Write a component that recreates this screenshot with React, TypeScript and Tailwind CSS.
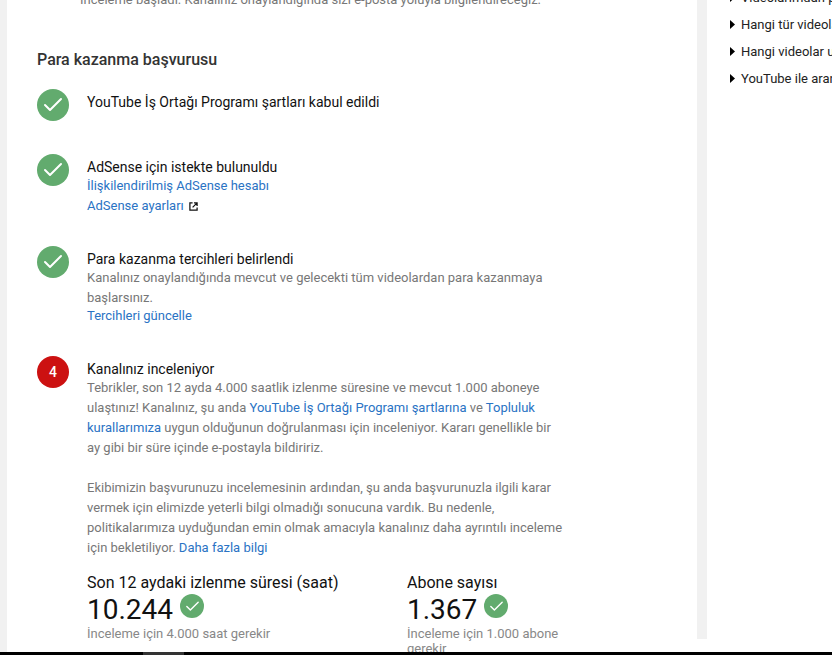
import { Check } from "lucide-react";

const GREEN = "bg-[#62ab6e]";

function StepIcon({ done = true, n }: { done?: boolean; n?: number }) {
    return (
        <div className={`flex h-8 w-8 shrink-0 items-center justify-center rounded-full ${done ? GREEN : "bg-[#cc1111]"}`}>
            {done ? <CheckMark size={24} /> : <span className="text-sm font-medium text-white">{n}</span>}
        </div>
    );
}

function CheckMark({ size }: { size: number }) {
    return <Check size={size} color="white" strokeWidth={2} />;
}

function Stat({ label, value, note, width }: { label: string; value: string; note: string; width: string }) {
    return (
        <div className={`shrink-0 ${width}`}>
            <div className="text-base leading-5 text-[#111]">{label}</div>
            <div className="flex items-start gap-[7px]">
                <span className="text-[28px] leading-[34px] text-[#111]">{value}</span>
                <span className={`mt-[1px] flex h-6 w-6 items-center justify-center rounded-full ${GREEN}`}>
                    <CheckMark size={17} />
                </span>
            </div>
            <div className="-mt-[1px] text-[13px] leading-[15px] text-[#888]">{note}</div>
        </div>
    );
}

function A({ children }: { children: React.ReactNode }) {
    return <span className="text-[#2a73c4]">{children}</span>;
}

export default function App() {
    return (
        <div className="flex h-[655px] w-[832px] flex-col overflow-hidden bg-white font-['Roboto',sans-serif]">
            <div className="flex h-[652px] overflow-hidden">
                {/* main card */}
                <div className="w-[7px] shrink-0 bg-[#f1f1f1]" />
                <div className="w-[690px] shrink-0 overflow-hidden pl-[30px]">
                    <p className="-mt-[8px] ml-[43px] whitespace-nowrap text-[13px] leading-[15px] text-[#777]">
                        İnceleme başladı. Kanalınız onaylandığında sizi e-posta yoluyla bilgilendireceğiz.
                    </p>
                    <h2 className="mt-[43px] text-base leading-5 font-medium text-[#333]">Para kazanma başvurusu</h2>

                    <div className="mt-[19px] flex h-[65px] gap-[18px]">
                        <StepIcon />
                        <div className="pt-[3px] text-sm leading-5 text-[#111]">YouTube İş Ortağı Programı şartları kabul edildi</div>
                    </div>

                    <div className="flex h-[92px] gap-[18px]">
                        <StepIcon />
                        <div className="pt-[4px] text-[13px] leading-5">
                            <div className="text-sm leading-[18px] text-[#111]">AdSense için istekte bulunuldu</div>
                            <div className="leading-[19px]"><A>İlişkilendirilmiş AdSense hesabı</A></div>
                            <div className="mt-[1px] flex items-center gap-[5px]">
                                <A>AdSense ayarları</A>
                                <svg width="9" height="9" viewBox="0 0 10 10" fill="none" stroke="#111" strokeWidth="1.4">
                                    <path d="M4 1H1V9H9V6" />
                                    <path d="M5.5 1H9V4.5M9 1L4 6" />
                                </svg>
                            </div>
                        </div>
                    </div>

                    <div className="flex h-[110px] gap-[18px]">
                        <StepIcon />
                        <div className="w-[475px] pt-[4px] text-[13px] leading-5 text-[#777]">
                            <div className="text-sm leading-[18px] text-[#111]">Para kazanma tercihleri belirlendi</div>
                            <p>Kanalınız onaylandığında mevcut ve gelecekti tüm videolardan para kazanmaya başlarsınız.</p>
                            <div className="-mt-[2px]"><A>Tercihleri güncelle</A></div>
                        </div>
                    </div>

                    <div className="flex gap-[18px]">
                        <StepIcon done={false} n={4} />
                        <div className="w-[478px] pt-[4px] text-[13px] leading-5 text-[#777]">
                            <div className="text-sm leading-[18px] text-[#111]">Kanalınız inceleniyor</div>
                            <p>
                                Tebrikler, son 12 ayda 4.000 saatlik izlenme süresine ve mevcut 1.000 aboneye ulaştınız! Kanalınız, şu anda{" "}
                                <A>YouTube İş Ortağı Programı şartlarına</A> ve <A>Topluluk kurallarımıza</A> uygun olduğunun doğrulanması için inceleniyor. Kararı genellikle bir ay gibi bir süre içinde e-postayla bildiririz.
                            </p>
                            <p className="mt-5">
                                Ekibimizin başvurunuzu incelemesinin ardından, şu anda başvurunuzla ilgili karar vermek için elimizde yeterli bilgi olmadığı sonucuna vardık. Bu nedenle, politikalarımıza uyduğundan emin olmak amacıyla kanalınız daha ayrıntılı inceleme için bekletiliyor. <A>Daha fazla bilgi</A>
                            </p>
                            <div className="mt-[15px] flex">
                                <Stat width="w-[320px]" label="Son 12 aydaki izlenme süresi (saat)" value="10.244" note="İnceleme için 4.000 saat gerekir" />
                                <Stat width="w-[158px]" label="Abone sayısı" value="1.367" note="İnceleme için 1.000 abone gerekir" />
                            </div>
                        </div>
                    </div>
                </div>

                {/* gutter */}
                <div className="mb-[13px] w-[10px] shrink-0 bg-[#f1f1f1]" />

                {/* help list */}
                <div className="-mt-[10px] min-w-0 flex-1 overflow-hidden pl-[23px] text-[13px] leading-[15px] text-[#222]">
                    {["Videolarımdan para kazanma", "Hangi tür videolar uygundur", "Hangi videolar uygun değildir", "YouTube ile aranızdaki anlaşma"].map((t) => (
                        <div key={t} className="mb-[12px] flex items-center gap-[6px] whitespace-nowrap">
                            <svg width="5" height="9" viewBox="0 0 5 9" className="shrink-0">
                                <path d="M0 0L5 4.5L0 9Z" fill="#000" />
                            </svg>
                            <span>{t}</span>
                        </div>
                    ))}
                </div>
            </div>

            {/* window edge */}
            <div className="flex h-[3px] shrink-0 bg-black">
                <div className="ml-[143px] w-[41px] bg-[#333]" />
            </div>
        </div>
    );
}
